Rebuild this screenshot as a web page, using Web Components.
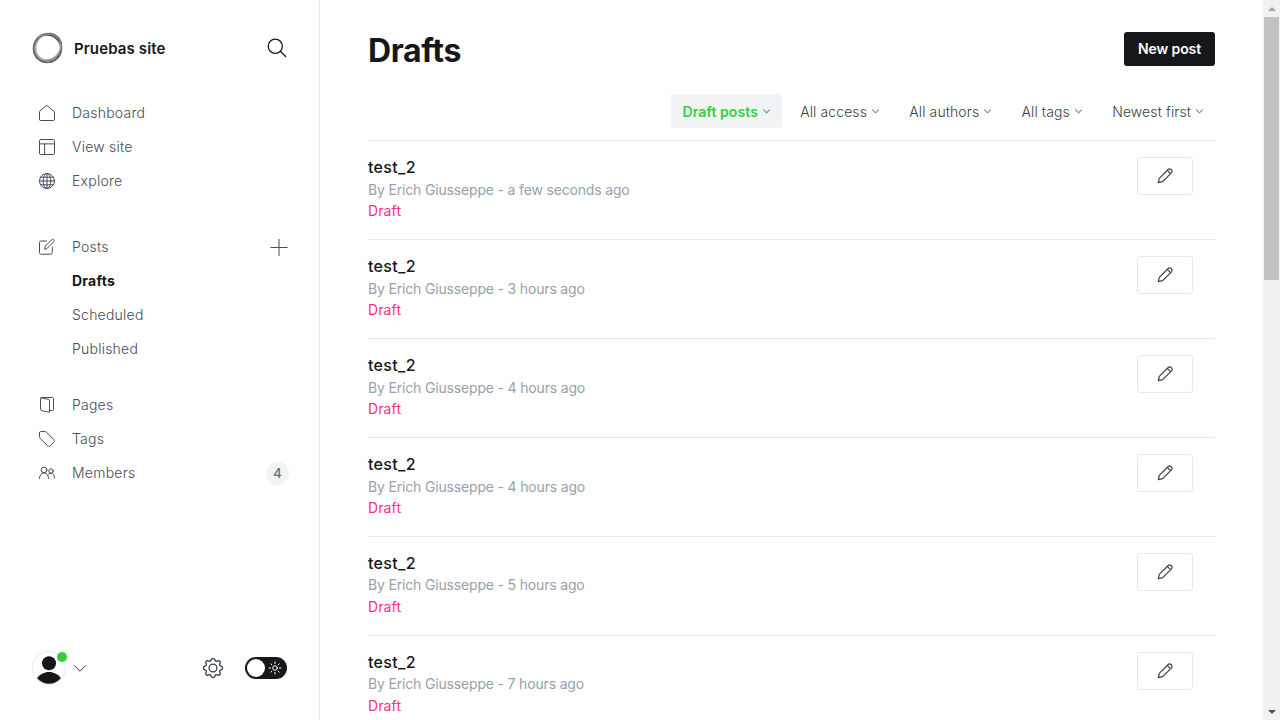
<!DOCTYPE html>
<html lang="en">
<head>
<meta charset="utf-8">
<title>Drafts - Pruebas site</title>
<style>
html,body{margin:0;height:100%;overflow:hidden;background:#fff}
body{font-family:Inter,"Liberation Sans",sans-serif;color:#15171a;font-size:14px}
</style>
</head>
<body>
<admin-app></admin-app>
<script>
const ICONS = {
  search:'<svg width="20" height="20" viewBox="0 0 20 20"><circle cx="8.3" cy="8.3" r="7.1"/><path d="m13.400 13.300 5.200 5.200"/></svg>',
  home:'<svg width="16" height="16" viewBox="0 0 16 16"><path d="M.5 6.8v7.7c0 .6.4 1 1 1h13c.6 0 1-.4 1-1V6.8L8 .6z"/></svg>',
  layout:'<svg width="16" height="16" viewBox="0 0 16 16"><rect x=".5" y=".5" width="15" height="15" rx="1.2"/><path d="M.5 4.9h15M5.6 4.9v10.6"/></svg>',
  globe:'<svg width="16" height="16" viewBox="0 0 16 16"><circle cx="8" cy="8" r="7.5"/><ellipse cx="8" cy="8" rx="3.8" ry="7.5"/><path d="M.5 8h15M8 .5v15M1.7 4.2h12.6M1.7 11.8h12.6"/></svg>',
  compose:'<svg width="16" height="16" viewBox="0 0 16 16"><path d="M7.500 2H2C1.200 2 .5 2.700.5 3.500v10.200c0 .8.7 1.500 1.500 1.500h9.800c.8 0 1.500-.7 1.500-1.500V8.200"/><path d="m5.700 9.900.6-2.800 6.400-6.400c.6-.6 1.400-.6 2 0s.5 1.400 0 2L8.300 9.200z"/></svg>',
  pages:'<svg width="16" height="16" viewBox="0 0 16 16"><path d="m2 .8 7.800 1.700c.4.100.7.500.7.900v11.900L2.400 13.500c-.5-.1-.9-.6-.9-1.100V1.500C1.500.9 1.900.5 2.500.5H13c.8 0 1.500.6 1.500 1.500v10.500c0 .6-.4 1-1 1h-3"/></svg>',
  tag:'<svg width="16" height="16" viewBox="0 0 16 16"><path d="M.5 1.700v4.100c0 .5.2 1 .5 1.300l7.700 7.800c.7.700 1.600.7 2.300 0l3.900-3.900c.7-.7.700-1.600 0-2.300L7.200 1C6.800.7 6.400.5 5.900.5H1.700C1 .5.500 1 .5 1.700z"/></svg>',
  members:'<svg width="16" height="16" viewBox="0 0 16 16"><circle cx="5" cy="5" r="2.900"/><circle cx="12" cy="6" r="2.200"/><path d="M.5 13.500c0-3 1.700-5.600 4.500-5.600s4.500 2.600 4.500 5.600M9.200 9.500c.7-.8 1.700-1.300 2.800-1.300 2.200 0 3.500 2 3.500 4.800"/></svg>',
  plus:'<svg width="17" height="17" viewBox="0 0 17 17" stroke-linecap="butt"><path d="M8 0v17M-.5 8.500h17"/></svg>',
  chevron:'<svg width="12" height="7" viewBox="0 0 12 7"><path d="m.5.700 5.500 5.500L11.500.700"/></svg>',
  small:'<svg width="7" height="5" viewBox="0 0 7 5"><path d="m.6.800 2.900 3 2.900-3"/></svg>',
  gear:'<svg width="20" height="20" viewBox="0 0 20 20"><circle cx="10" cy="10" r="3.900"/><path d="M8.200 1.500c.5-1.300 3.100-1.300 3.600 0l.4 1.100c.3.700 1 1 1.700.7l1.100-.5c1.300-.6 2.800.9 2.200 2.200l-.5 1.100c-.3.700 0 1.400.7 1.700l1.100.4c1.300.5 1.300 3.100 0 3.600l-1.100.4c-.7.300-1 1-.7 1.700l.5 1.100c.6 1.300-.9 2.800-2.200 2.200l-1.100-.5c-.7-.3-1.400 0-1.700.7l-.4 1.100c-.5 1.300-3.100 1.300-3.600 0l-.4-1.100c-.3-.7-1-1-1.700-.7l-1.100.5c-1.300.6-2.800-.9-2.200-2.200l.5-1.100c.3-.7 0-1.400-.7-1.700l-1.100-.4c-1.300-.5-1.300-3.100 0-3.600l1.100-.4c.7-.3 1-1 .7-1.700L2.800 5c-.6-1.300.9-2.800 2.200-2.200l1.100.5c.7.300 1.400 0 1.700-.7z"/></svg>',
  sun:'<svg width="12" height="12" viewBox="0 0 12 12"><circle cx="6" cy="6" r="2.300"/><path d="M6 0v1.600M6 10.400V12M0 6h1.600M10.400 6H12M1.800 1.800l1 1M9.200 9.200l1 1M1.800 10.200l1-1M9.200 2.800l1-1"/></svg>',
  pencil:'<svg width="16" height="16" viewBox="0 0 16 16"><path d="m1.300 14.700 1-4.300 8.900-8.900c.8-.8 2-.8 2.800 0l.5.500c.8.800.8 2 0 2.800L5.600 13.700zM10.300 2.400l3.300 3.300"/></svg>',
  logo:'<svg width="32" height="32" viewBox="0 0 32 32"><circle cx="15.200" cy="16.800" r="13.700" stroke="#4a4a4a" stroke-width="1.500"/><ellipse cx="17" cy="15.500" rx="13.700" ry="12.200" stroke="#aaa" stroke-width="2" transform="rotate(-58 16 16)"/><ellipse cx="16.300" cy="15.400" rx="14.700" ry="13.300" stroke="#555" stroke-width=".8" transform="rotate(-40 16 16)"/><ellipse cx="15.800" cy="16.200" rx="14.700" ry="13.900" stroke="#777" stroke-width=".9" transform="rotate(60 16 16)"/></svg>',
  avatar:'<svg width="34" height="34" viewBox="0 0 34 34"><circle cx="17" cy="17" r="16.500" fill="#fff" stroke="#e8eaed"/><circle cx="17" cy="12.300" r="7" fill="#15171a" stroke="none"/><path d="M5.100 27.200C7.900 23.300 12.200 21 17 21s9.100 2.300 11.900 6.200C26 30.700 21.800 32.700 17 32.700S8 30.700 5.100 27.200z" fill="#15171a" stroke="none"/></svg>'
};
function define(name, css, html, setup){
  const t = document.createElement('template');
  t.innerHTML = '<style>:host{display:block;box-sizing:border-box}*{box-sizing:border-box}'+css+'</style>'+html;
  customElements.define(name, class extends HTMLElement{
    connectedCallback(){
      if(this.shadowRoot) return;
      this.attachShadow({mode:'open'}).append(t.content.cloneNode(true));
      if(setup) setup(this, this.shadowRoot);
    }
  });
}
define('ui-icon',':host{display:inline-flex;flex:none}svg{display:block;fill:none;stroke:currentColor;stroke-width:var(--sw,1);stroke-linejoin:round;overflow:visible}svg:not([stroke-linecap]){stroke-linecap:round}','',
  (h,s)=>s.append(document.createRange().createContextualFragment(ICONS[h.getAttribute('name')])));
define('nav-item',`:host{height:34px;display:flex;align-items:center;padding:0 31px 0 39px;color:#454d57;font-weight:360;letter-spacing:.23px}
 :host([sub]) .pic{visibility:hidden}:host([active]){color:#15171a;font-weight:650;letter-spacing:.22px}
 .pic{width:16px;height:16px;margin-right:17px;flex:none}.label{flex:1;padding-bottom:2px}`,
 '<span class="pic"></span><span class="label"><slot></slot></span><slot name="end"></slot>',
 (h,s)=>{const n=h.getAttribute('icon');if(n){const i=document.createElement('ui-icon');i.setAttribute('name',n);s.querySelector('.pic').append(i)}});
define('count-badge',':host{height:23px;min-width:23px;border-radius:12px;background:#f1f3f4;display:flex;align-items:center;justify-content:center;font-size:13px;letter-spacing:0;font-weight:500;color:#626d79;margin-right:-1px}','<slot></slot>');
define('theme-toggle',':host{width:42px;height:22px;border-radius:11px;background:#15171a;display:flex;align-items:center;justify-content:space-between;padding:0 6px 0 2px;color:#fff}.knob{width:18px;height:18px;border-radius:50%;background:#fff}','<span class="knob"></span><ui-icon name="sun"></ui-icon>');
define('user-menu',':host{display:flex;align-items:center;gap:8px;color:#394047}.face{position:relative;display:flex}.dot{position:absolute;right:-1px;top:1px;width:10px;height:10px;border-radius:50%;background:#30cf43}','<span class="face"><ui-icon name="avatar"></ui-icon><i class="dot"></i></span><ui-icon name="chevron"></ui-icon>');
define('side-bar',`:host{width:320px;height:720px;border-right:1px solid #e6e9eb;display:flex;flex-direction:column;flex:none}
 header{display:flex;align-items:center;padding:32px 32px 0;height:64px}.name{font-size:15px;font-weight:600;letter-spacing:.12px;margin-left:10px;flex:1}
 .g1{margin-top:32px}.g2{margin-top:32px}.g3{margin-top:22px}footer{margin-top:auto;height:69px;display:flex;align-items:flex-start;padding:0 32px}
 footer user-menu{flex:1;height:34px}.tools{height:34px;display:flex;align-items:center;gap:22px;color:#394047;--sw:1.3}theme-toggle{--sw:1}`,
 `<header><ui-icon name="logo"></ui-icon><span class="name">Pruebas site</span><ui-icon name="search" style="--sw:1.3"></ui-icon></header>
 <nav><div class="g1"><nav-item icon="home">Dashboard</nav-item><nav-item icon="layout">View site</nav-item><nav-item icon="globe">Explore</nav-item></div>
 <div class="g2"><nav-item icon="compose">Posts<ui-icon slot="end" name="plus"></ui-icon></nav-item><nav-item sub active>Drafts</nav-item><nav-item sub>Scheduled</nav-item><nav-item sub>Published</nav-item></div>
 <div class="g3"><nav-item icon="pages">Pages</nav-item><nav-item icon="tag">Tags</nav-item><nav-item icon="members">Members<count-badge slot="end">4</count-badge></nav-item></div></nav>
 <footer><user-menu></user-menu><div class="tools"><ui-icon name="gear"></ui-icon><theme-toggle></theme-toggle></div></footer>`);
define('filter-select',`:host{height:34px;padding:0 12px;display:flex;align-items:center;gap:5px;color:#394047;border-radius:2px;font-weight:360;letter-spacing:.1px;white-space:nowrap}
 :host([active]){background:#f1f3f4;letter-spacing:.08px}:host([active]) span{color:#30cf43;font-weight:600}span{padding-top:1px}ui-icon{color:#7c8b9a;margin-top:1px;--sw:1.1}`,'<span><slot></slot></span><ui-icon name="small"></ui-icon>');
define('post-row',`:host{height:98.950px;border-top:1px solid #e6e9eb;display:flex;justify-content:space-between;padding:16px 22px 0 0}
 h3{margin:0;font-size:16px;line-height:21px;font-weight:550;letter-spacing:.3px}p{margin:.7px 0 0;line-height:21px;color:#95a1ad;font-size:14px;font-weight:400;letter-spacing:-.17px}p.status{margin:.2px 0 0;color:#fb2d8d;letter-spacing:.12px}
 .edit{width:56px;height:38px;border:1px solid #e6e9eb;border-radius:3px;display:flex;align-items:center;justify-content:center;color:#394047;background:#fff;padding:0;--sw:1.2}`,
 '<div><h3><slot></slot></h3><p>By Erich Giusseppe - <slot name="time"></slot></p><p class="status">Draft</p></div><button class="edit" aria-label="Edit"><ui-icon name="pencil"></ui-icon></button>');
define('page-scrollbar',`:host{width:17px;height:720px;background:#f1f1f1;display:flex;flex-direction:column;align-items:center;flex:none}
 .b{height:17px;display:flex;align-items:center;color:#a3a3a3}.b svg{display:block}.b+.thumb{width:15px;height:263px;background:#c1c1c1}.b:last-child{margin-top:auto;color:#505050}`,
 '<div class="b"><svg width="8" height="4"><path d="M0 4 4 0l4 4z" fill="currentColor"/></svg></div><div class="thumb"></div><div class="b"><svg width="8" height="4"><path d="m0 0 4 4 4-4z" fill="currentColor"/></svg></div>');
define('drafts-screen',`:host{flex:1;min-width:0;height:720px;overflow:hidden;padding:32px 48px 0}
 header{display:flex;justify-content:space-between;align-items:flex-start;height:62px}h1{margin:0;font-size:32px;line-height:38px;font-weight:700;letter-spacing:-.35px}
 .new{height:34px;width:91px;border:0;border-radius:3px;background:#15171a;color:#fff;font:600 14px Inter,sans-serif;padding:0 0 2px;letter-spacing:-.1px}
 .filters{display:flex;justify-content:flex-end;gap:6.300px;height:46px}`,
 `<header><h1>Drafts</h1><button class="new">New post</button></header>
 <div class="filters"><filter-select active>Draft posts</filter-select><filter-select>All access</filter-select><filter-select>All authors</filter-select><filter-select>All tags</filter-select><filter-select>Newest first</filter-select></div><section></section>`,
 (h,s)=>{s.querySelector('section').innerHTML=['a few seconds','3 hours','4 hours','4 hours','5 hours','7 hours'].map(t=>`<post-row>test_2<span slot="time">${t} ago</span></post-row>`).join('')});
define('admin-app',':host{display:flex;width:1280px;height:720px}','<side-bar></side-bar><drafts-screen></drafts-screen><page-scrollbar></page-scrollbar>');
</script>
</body>
</html>
